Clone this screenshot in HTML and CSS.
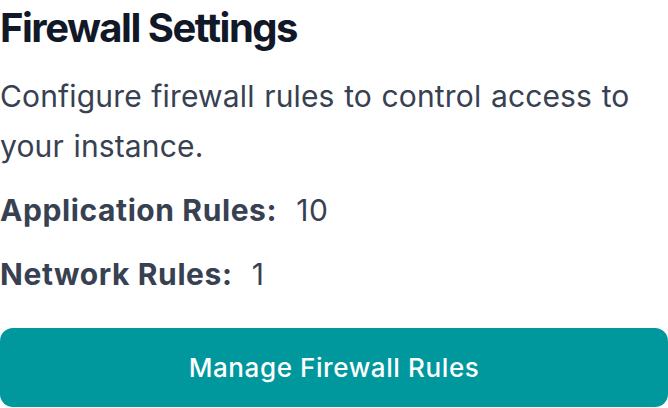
FILE: index.html
```html
<!DOCTYPE html>
<html lang="en">
<head>
    <meta charset="UTF-8">
    <meta name="viewport" content="width=device-width, initial-scale=1.0">
    <title>Firewall Settings</title>
    <link rel="stylesheet" href="styles.css">
</head>
<body>
    <div class="card">
        <h2 class="title">Firewall Settings</h2>
        <p class="desc">Configure firewall rules to control access to your instance.</p>
        <div class="stat"><span class="stat-label">Application Rules:</span> <span class="stat-value">10</span></div>
        <div class="stat"><span class="stat-label">Network Rules:</span> <span class="stat-value">1</span></div>
        <button class="button">Manage Firewall Rules</button>
    </div>
</body>
</html>
```

FILE: styles.css
```css
body {
    margin: 0;
    font-family: Inter, "Noto Sans", sans-serif;
    background-color: #fff;
    color: #374151;
}
.card {
    display: flex;
    flex-direction: column;
    width: 668px;
}
.title {
    margin: 0;
    font-size: 40px;
    line-height: 56px;
    font-weight: 700;
    color: #111827;
    letter-spacing: -1.5px;
}
.desc {
    margin: 15px 0 0;
    font-size: 30px;
    line-height: 50px;
    letter-spacing: 0.15px;
    word-spacing: 1px;
}
.stat {
    margin-top: 14px;
    font-size: 30px;
    line-height: 50px;
    letter-spacing: 0.6px;
}
.stat-label {
    font-weight: 700;
}
.stat-value {
    margin-left: 10px;
}
.button {
    margin-top: 29px;
    height: 79px;
    width: 100%;
    border: none;
    border-radius: 13px;
    background-color: #00989d;
    color: #fff;
    font-family: inherit;
    font-size: 26px;
    font-weight: 500;
    letter-spacing: 0.6px;
    cursor: pointer;
}
```
